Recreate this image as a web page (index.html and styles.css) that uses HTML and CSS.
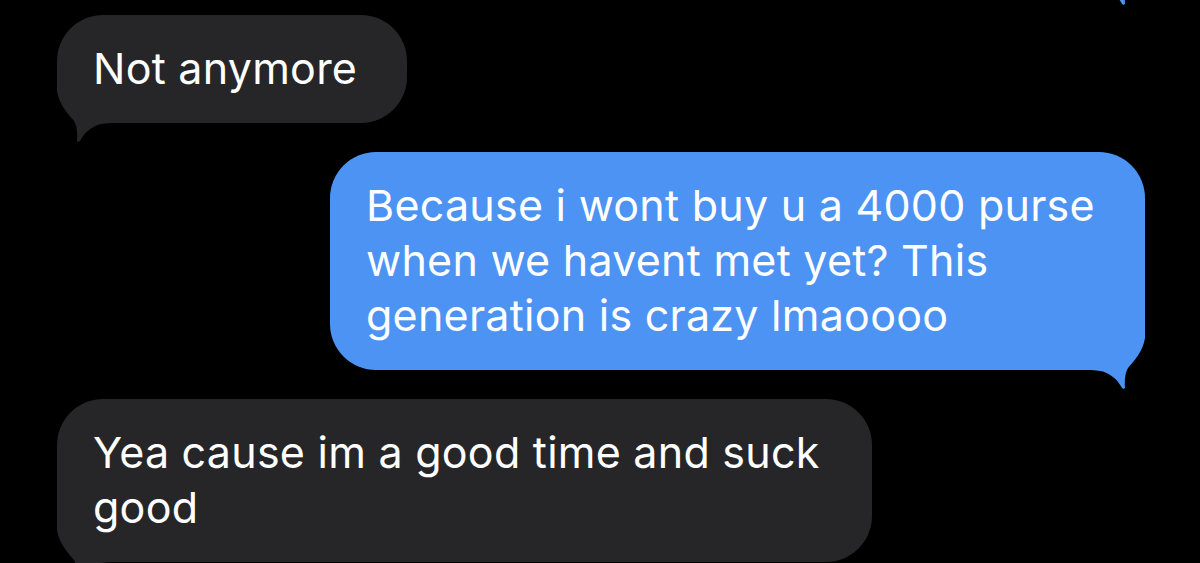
FILE: index.html
```html
<!DOCTYPE html>
<html lang="en">
  <head>
    <meta charset="utf-8">
    <title>Messages</title>
    <link rel="stylesheet" href="styles.css">
  </head>
  <body>
  <div class="chat">

    <div class="bubble out earlier">
      <svg class="tail" viewBox="0 -46 60 66"><path d="M0,-46 L0,-32 C2,-18 12,-8 17,-2 C20,3 20.5,10 20,18 C21,19 22,19 23,18 C26,12 32,5 42,1.5 C48,0 54,0 60,0 L60,-46 Z"/></svg>
    </div>

    <div class="bubble in">
      Not anymore
      <svg class="tail" viewBox="0 -46 60 66"><path d="M0,-46 L0,-32 C2,-18 12,-8 17,-2 C20,3 20.5,10 20,18 C21,19 22,19 23,18 C26,12 32,5 42,1.5 C48,0 54,0 60,0 L60,-46 Z"/></svg>
    </div>

    <div class="bubble out">
      Because i wont buy u a 4000 purse when we havent met yet? This generation is crazy lmaoooo
      <svg class="tail" viewBox="0 -46 60 66"><path d="M0,-46 L0,-32 C2,-18 12,-8 17,-2 C20,3 20.5,10 20,18 C21,19 22,19 23,18 C26,12 32,5 42,1.5 C48,0 54,0 60,0 L60,-46 Z"/></svg>
    </div>

    <div class="bubble in">
      Yea cause im a good time and suck good
      <svg class="tail" viewBox="0 -46 60 66"><path d="M0,-46 L0,-32 C2,-18 12,-8 17,-2 C20,3 20.5,10 20,18 C21,19 22,19 23,18 C26,12 32,5 42,1.5 C48,0 54,0 60,0 L60,-46 Z"/></svg>
    </div>

  </div>
  </body>
</html>
```

FILE: styles.css
```css
html {
  height: 100%;
}
body {
  margin: 0;
  padding: 0;
  background: #000;
  color: #fff;
  font-family: Inter, "Noto Sans", sans-serif;
  height: 100%;
  overflow: hidden;
}

.chat {
  display: flex;
  flex-direction: column;
  gap: 29px;
  padding: 0 55px 0 57px;
}

.bubble {
  position: relative;
  isolation: isolate;
  box-sizing: border-box;
  max-width: 815px;
  padding: 26px 50px 27px 36px;
  border-radius: 46px;
  font-size: 43px;
  line-height: 55px;
  letter-spacing: 0.25px;
}

/* tail sits under the text, over the bubble fill */
.bubble .tail {
  position: absolute;
  z-index: -1;
  bottom: -20px;
  width: 60px;
  height: 66px;
}

/* received */
.in {
  align-self: flex-start;
  background: #262629;
}
.in .tail {
  left: 0;
  fill: #262629;
}

/* sent */
.out {
  align-self: flex-end;
  background: #4c93f4;
}
.out .tail {
  right: 0;
  fill: #4c93f4;
  transform: scaleX(-1);
}

/* last sent bubble, scrolled off the top */
.earlier {
  width: 300px;
  height: 108px;
  margin-top: -122px;
}
```
